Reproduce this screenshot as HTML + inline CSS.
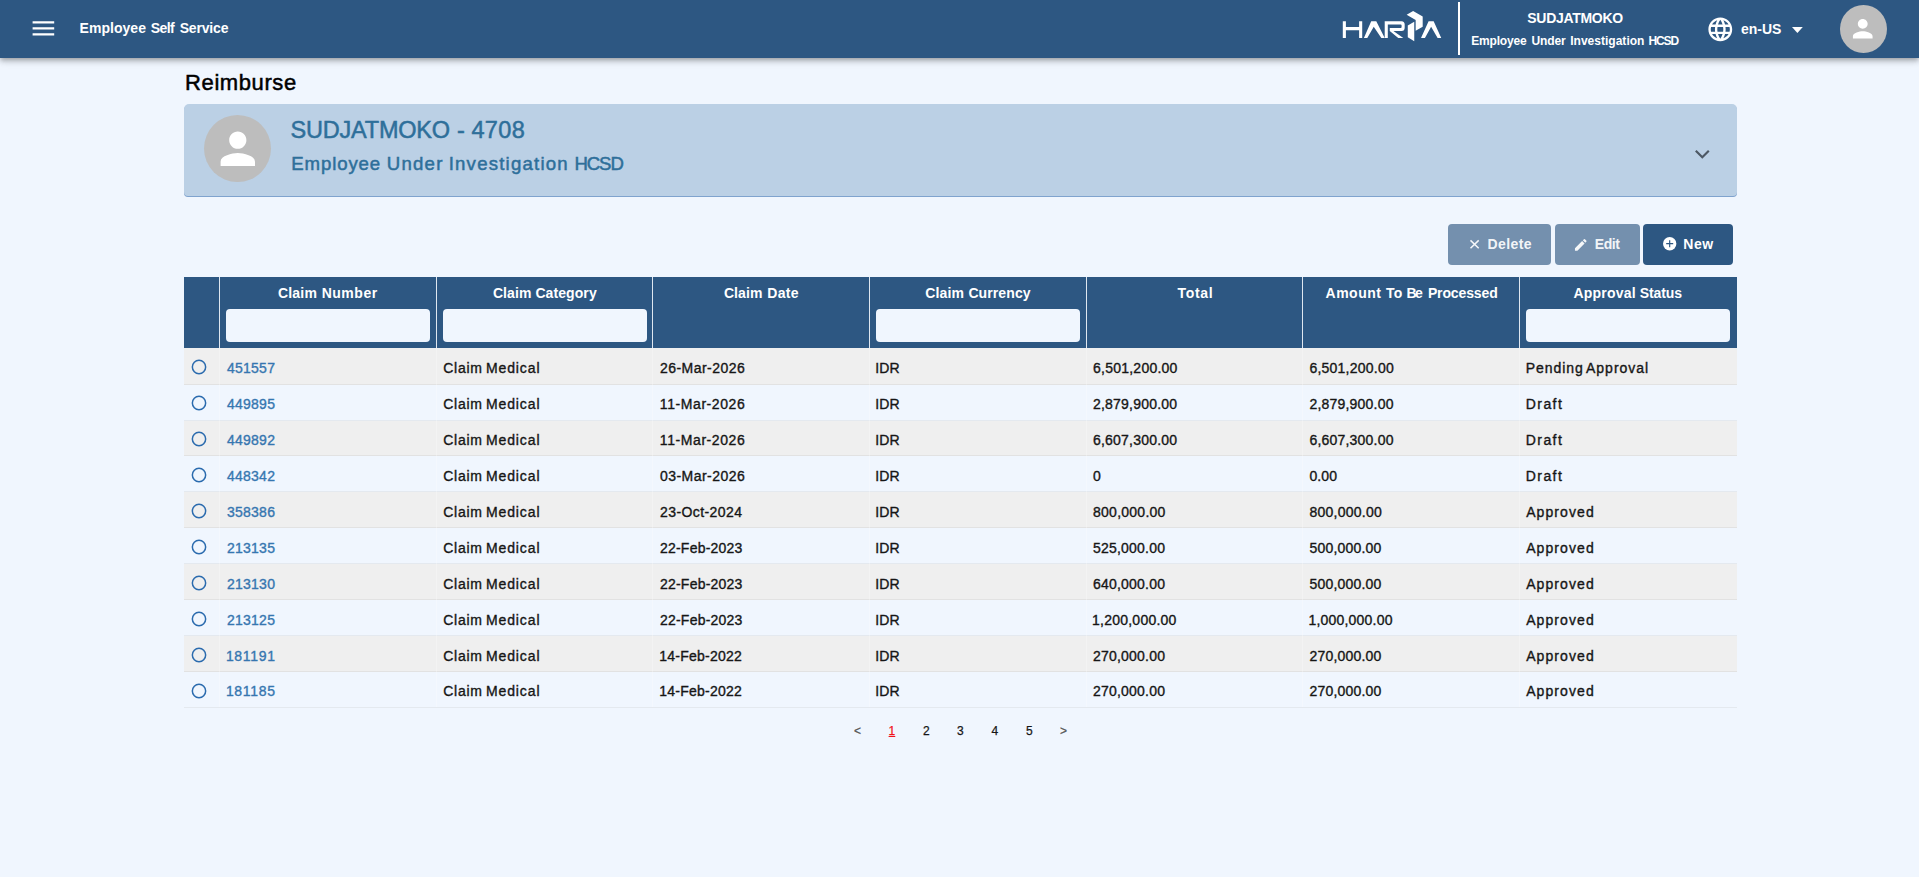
<!DOCTYPE html>
<html lang="en">
<head>
<meta charset="utf-8">
<title>Reimburse - Employee Self Service</title>
<style>
html,body{margin:0;padding:0}
body{width:1919px;height:877px;overflow:hidden;position:relative;background:#f0f6fe;font-family:"Liberation Sans",sans-serif}
.b{position:absolute}
.t{position:absolute;white-space:nowrap;line-height:1;font-weight:400}
.sw{-webkit-text-stroke:0.36px currentColor}
.sw3{-webkit-text-stroke:0.25px currentColor}
.sw5{-webkit-text-stroke:0.5px currentColor}
.g{}
.ul{text-decoration:underline;text-underline-offset:1px;text-decoration-thickness:1px}
.rad{position:absolute;width:14.8px;height:14.8px;box-sizing:border-box;border:1.5px solid #2c6cb0;border-radius:50%}
svg{position:absolute;overflow:visible}
#bar{position:absolute;left:0;top:0;width:1919px;height:57.8px;background:#2d5782;box-shadow:0 2px 4px -1px rgba(0,0,0,.2),0 4px 5px 0 rgba(0,0,0,.14),0 1px 10px 0 rgba(0,0,0,.12)}
#card{position:absolute;left:184px;top:104px;width:1552.6px;height:91.6px;background:#bbd0e5;border-radius:5px 5px 4px 4px;box-shadow:0 1px 0.5px rgba(90,135,190,.75)}
.av{position:absolute;border-radius:50%;background:#bdbdbd}
.btn{position:absolute;top:224px;height:40.5px;border-radius:4px}
</style>
</head>
<body>
<div class="b" style="left:184px;top:277px;width:1552.8px;height:71px;background:#2d5782;"></div>
<div class="b" style="left:219px;top:277px;width:1px;height:71px;background:#dfe7f0;"></div>
<div class="b" style="left:436px;top:277px;width:1px;height:71px;background:#dfe7f0;"></div>
<div class="b" style="left:652px;top:277px;width:1px;height:71px;background:#dfe7f0;"></div>
<div class="b" style="left:869px;top:277px;width:1px;height:71px;background:#dfe7f0;"></div>
<div class="b" style="left:1086px;top:277px;width:1px;height:71px;background:#dfe7f0;"></div>
<div class="b" style="left:1302px;top:277px;width:1px;height:71px;background:#dfe7f0;"></div>
<div class="b" style="left:1519px;top:277px;width:1px;height:71px;background:#dfe7f0;"></div>
<div class="b" style="left:226px;top:309px;width:204px;height:33px;background:#f0f6fe;border-radius:4px"></div>
<div class="b" style="left:443px;top:309px;width:204px;height:33px;background:#f0f6fe;border-radius:4px"></div>
<div class="b" style="left:876px;top:309px;width:204px;height:33px;background:#f0f6fe;border-radius:4px"></div>
<div class="b" style="left:1526px;top:309px;width:204px;height:33px;background:#f0f6fe;border-radius:4px"></div>
<div class="b" style="left:184px;top:348px;width:1552.8px;height:36px;background:#efefef;"></div>
<div class="b" style="left:184px;top:384px;width:1552.8px;height:1px;background:#e2e2e2;"></div>
<div class="b" style="left:184px;top:420px;width:1552.8px;height:1px;background:#e4e9ef;"></div>
<div class="b" style="left:184px;top:421px;width:1552.8px;height:34px;background:#efefef;"></div>
<div class="b" style="left:184px;top:455px;width:1552.8px;height:1px;background:#e2e2e2;"></div>
<div class="b" style="left:184px;top:491px;width:1552.8px;height:1px;background:#e4e9ef;"></div>
<div class="b" style="left:184px;top:492px;width:1552.8px;height:35px;background:#efefef;"></div>
<div class="b" style="left:184px;top:527px;width:1552.8px;height:1px;background:#e2e2e2;"></div>
<div class="b" style="left:184px;top:563px;width:1552.8px;height:1px;background:#e4e9ef;"></div>
<div class="b" style="left:184px;top:564px;width:1552.8px;height:35px;background:#efefef;"></div>
<div class="b" style="left:184px;top:599px;width:1552.8px;height:1px;background:#e2e2e2;"></div>
<div class="b" style="left:184px;top:635px;width:1552.8px;height:1px;background:#e4e9ef;"></div>
<div class="b" style="left:184px;top:636px;width:1552.8px;height:35px;background:#efefef;"></div>
<div class="b" style="left:184px;top:671px;width:1552.8px;height:1px;background:#e2e2e2;"></div>
<div class="b" style="left:184px;top:707px;width:1552.8px;height:1px;background:#e4e9ef;"></div>
<div class="b" style="left:219px;top:348px;width:1px;height:359px;background:rgba(255,255,255,.28);"></div>
<div class="b" style="left:436px;top:348px;width:1px;height:359px;background:rgba(255,255,255,.28);"></div>
<div class="b" style="left:652px;top:348px;width:1px;height:359px;background:rgba(255,255,255,.28);"></div>
<div class="b" style="left:869px;top:348px;width:1px;height:359px;background:rgba(255,255,255,.28);"></div>
<div class="b" style="left:1086px;top:348px;width:1px;height:359px;background:rgba(255,255,255,.28);"></div>
<div class="b" style="left:1302px;top:348px;width:1px;height:359px;background:rgba(255,255,255,.28);"></div>
<div class="b" style="left:1519px;top:348px;width:1px;height:359px;background:rgba(255,255,255,.28);"></div>
<div id="card"></div>
<div class="av" style="left:204px;top:114.9px;width:67.1px;height:67.1px"></div>
<svg style="left:212.25px;top:122.6px" width="51.6" height="51.6" viewBox="0 0 24 24"><path fill="#fff" d="M12 12c2.21 0 4-1.79 4-4s-1.79-4-4-4-4 1.79-4 4 1.79 4 4 4zm0 2c-2.67 0-8 1.34-8 4v2h16v-2c0-2.66-5.33-4-8-4z"/></svg>
<svg style="left:1695.1px;top:149.6px" width="14.6" height="8.6" viewBox="0 0 14.6 8.6"><path fill="none" stroke="#4d5864" stroke-width="2.2" d="M0.8 0.8L7.3 7.2L13.8 0.8"/></svg>

<div class="btn" style="left:1448px;width:102.8px;background:#7490ae"></div>
<div class="btn" style="left:1555px;width:84.6px;background:#7490ae"></div>
<div class="btn" style="left:1643px;width:89.8px;background:#2d5782"></div>
<svg style="left:1469.9px;top:240px" width="9.2" height="8.6" viewBox="0 0 9.2 8.6"><path fill="none" stroke="rgba(255,255,255,.93)" stroke-width="1.5" d="M0.5 0.4L8.7 8.2M8.7 0.4L0.5 8.2"/></svg>
<svg style="left:1573.4px;top:236.9px" width="15.6" height="15.6" viewBox="0 0 24 24"><path fill="rgba(255,255,255,.93)" d="M3 17.25V21h3.75L17.81 9.94l-3.75-3.75L3 17.25zM20.71 7.04c.39-.39.39-1.02 0-1.41l-2.34-2.34a.9959.9959 0 0 0-1.41 0l-1.83 1.83 3.75 3.75 1.83-1.83z"/></svg>
<svg style="left:1663px;top:237.35px" width="13.4" height="13.4" viewBox="0 0 13.4 13.4"><circle cx="6.7" cy="6.7" r="6.7" fill="#fff"/><path stroke="#2d5782" stroke-width="1.15" fill="none" d="M6.7 3.2V10.2M3.2 6.7H10.2"/></svg>

<div id="bar"></div>
<!-- hamburger -->
<svg style="left:28.9px;top:14.1px" width="28.8" height="28.8" viewBox="0 0 24 24"><path fill="#fff" d="M3 18h18v-2H3v2zm0-5h18v-2H3v2zm0-7v2h18V6H3z"/></svg>
<!-- logo -->
<svg style="left:1338px;top:6px" width="108" height="40" viewBox="0 0 1919 711">
<g fill="#fff">
<path d="M85 270h55v105h235V270h55v300h-55V430H140v140H85z"/>
<path d="M460 570L590 270h90l150 300h-60L635 370 520 570z"/>
<path d="M830 270h300q55 5 55 60v55q0 55-55 60H985l175 125h-90L920 445V390h195q15 0 15-15v-30q0-15-15-15H885v240h-55z"/>
<path d="M1220 155L1335 90l170 95v185l-125 70V250z"/>
<path d="M1240 345l115-65v345l-115-70z"/>
<path d="M1475 570l135-300h90l135 300h-65L1655 370 1545 570z"/>
</g>
</svg>
<div class="b" style="left:1458px;top:2px;width:2px;height:53px;background:#fff"></div>
<!-- globe -->
<svg style="left:1706px;top:15px" width="28.6" height="28.6" viewBox="0 0 24 24"><path fill="#fff" d="M11.99 2C6.47 2 2 6.48 2 12s4.47 10 9.99 10C17.52 22 22 17.52 22 12S17.52 2 11.99 2zm6.93 6h-2.95c-.32-1.25-.78-2.45-1.38-3.56 1.84.63 3.37 1.91 4.33 3.56zM12 4.04c.83 1.2 1.48 2.53 1.91 3.96h-3.82c.43-1.43 1.08-2.76 1.91-3.96zM4.26 14C4.1 13.36 4 12.69 4 12s.1-1.36.26-2h3.38c-.08.66-.14 1.32-.14 2 0 .68.06 1.34.14 2H4.26zm.82 2h2.95c.32 1.25.78 2.45 1.38 3.56-1.84-.63-3.37-1.9-4.33-3.56zm2.95-8H5.08c.96-1.66 2.49-2.93 4.33-3.56C8.81 5.55 8.35 6.75 8.03 8zM12 19.96c-.83-1.2-1.48-2.53-1.91-3.96h3.82c-.43 1.43-1.08 2.76-1.91 3.96zM14.34 14H9.66c-.09-.66-.16-1.32-.16-2 0-.68.07-1.35.16-2h4.68c.09.65.16 1.32.16 2 0 .68-.07 1.34-.16 2zm.25 5.56c.6-1.11 1.06-2.31 1.38-3.56h2.95c-.96 1.65-2.49 2.93-4.33 3.56zM16.36 14c.08-.66.14-1.32.14-2 0-.68-.06-1.34-.14-2h3.38c.16.64.26 1.31.26 2s-.1 1.36-.26 2h-3.38z"/></svg>
<svg style="left:1792.2px;top:26.7px" width="10.8" height="6" viewBox="0 0 10.8 6"><path fill="#fff" d="M0 0h10.8L5.4 6z"/></svg>
<!-- avatar -->
<div class="av" style="left:1839.9px;top:4.8px;width:47.3px;height:48.2px"></div>
<svg style="left:1848.3px;top:13.65px" width="29.5" height="29.5" viewBox="0 0 24 24"><path fill="#fff" d="M12 12c2.21 0 4-1.79 4-4s-1.79-4-4-4-4 1.79-4 4 1.79 4 4 4zm0 2c-2.67 0-8 1.34-8 4v2h16v-2c0-2.66-5.33-4-8-4z"/></svg>
<svg style="left:191.10px;top:359.00px" width="16" height="16" viewBox="0 0 16 16"><circle cx="8" cy="8" r="6.65" fill="none" stroke="#2b6bae" stroke-width="1.5"/></svg>
<svg style="left:191.10px;top:394.97px" width="16" height="16" viewBox="0 0 16 16"><circle cx="8" cy="8" r="6.65" fill="none" stroke="#2b6bae" stroke-width="1.5"/></svg>
<svg style="left:191.10px;top:430.94px" width="16" height="16" viewBox="0 0 16 16"><circle cx="8" cy="8" r="6.65" fill="none" stroke="#2b6bae" stroke-width="1.5"/></svg>
<svg style="left:191.10px;top:466.91px" width="16" height="16" viewBox="0 0 16 16"><circle cx="8" cy="8" r="6.65" fill="none" stroke="#2b6bae" stroke-width="1.5"/></svg>
<svg style="left:191.10px;top:502.88px" width="16" height="16" viewBox="0 0 16 16"><circle cx="8" cy="8" r="6.65" fill="none" stroke="#2b6bae" stroke-width="1.5"/></svg>
<svg style="left:191.10px;top:538.85px" width="16" height="16" viewBox="0 0 16 16"><circle cx="8" cy="8" r="6.65" fill="none" stroke="#2b6bae" stroke-width="1.5"/></svg>
<svg style="left:191.10px;top:574.82px" width="16" height="16" viewBox="0 0 16 16"><circle cx="8" cy="8" r="6.65" fill="none" stroke="#2b6bae" stroke-width="1.5"/></svg>
<svg style="left:191.10px;top:610.79px" width="16" height="16" viewBox="0 0 16 16"><circle cx="8" cy="8" r="6.65" fill="none" stroke="#2b6bae" stroke-width="1.5"/></svg>
<svg style="left:191.10px;top:646.76px" width="16" height="16" viewBox="0 0 16 16"><circle cx="8" cy="8" r="6.65" fill="none" stroke="#2b6bae" stroke-width="1.5"/></svg>
<svg style="left:191.10px;top:682.73px" width="16" height="16" viewBox="0 0 16 16"><circle cx="8" cy="8" r="6.65" fill="none" stroke="#2b6bae" stroke-width="1.5"/></svg>
<span class="t g" style="left:79.50px;top:21.00px;font-size:14px;color:#fff;letter-spacing:0.050px;font-weight:700">Employee</span>
<span class="t g" style="left:150.80px;top:21.00px;font-size:14px;color:#fff;letter-spacing:-0.605px;font-weight:700">Self</span>
<span class="t g" style="left:179.70px;top:21.00px;font-size:14px;color:#fff;letter-spacing:-0.172px;font-weight:700">Service</span>
<span class="t g" style="left:1527.30px;top:11.00px;font-size:14px;color:#fff;letter-spacing:-0.303px;font-weight:700">SUDJATMOKO</span>
<span class="t g" style="left:1471.30px;top:35.00px;font-size:12px;color:#fff;letter-spacing:-0.202px;font-weight:700">Employee</span>
<span class="t g" style="left:1531.50px;top:35.00px;font-size:12px;color:#fff;letter-spacing:-0.150px;font-weight:700">Under</span>
<span class="t g" style="left:1570.20px;top:35.00px;font-size:12px;color:#fff;letter-spacing:0.018px;font-weight:700">Investigation</span>
<span class="t g" style="left:1648.40px;top:35.00px;font-size:12px;color:#fff;letter-spacing:-1.079px;font-weight:700">HCSD</span>
<span class="t g" style="left:1741.00px;top:22.00px;font-size:14px;color:#fff;letter-spacing:-0.028px;font-weight:700">en-US</span>
<span class="t sw5" style="left:185.10px;top:71.50px;font-size:22px;color:#000;letter-spacing:0.583px">Reimburse</span>
<span class="t sw5" style="left:290.60px;top:119.25px;font-size:23.5px;color:#2e6f9a;letter-spacing:-0.220px">SUDJATMOKO</span>
<span class="t sw5" style="left:456.90px;top:119.25px;font-size:23.5px;color:#2e6f9a;letter-spacing:0.000px">-</span>
<span class="t sw5" style="left:471.40px;top:119.25px;font-size:23.5px;color:#2e6f9a;letter-spacing:0.397px">4708</span>
<span class="t sw5" style="left:291.30px;top:155.20px;font-size:18.6px;color:#2e6f9a;letter-spacing:0.880px">Employee</span>
<span class="t sw5" style="left:386.70px;top:155.20px;font-size:18.6px;color:#2e6f9a;letter-spacing:1.262px">Under</span>
<span class="t sw5" style="left:448.70px;top:155.20px;font-size:18.6px;color:#2e6f9a;letter-spacing:1.212px">Investigation</span>
<span class="t sw5" style="left:574.50px;top:155.20px;font-size:18.6px;color:#2e6f9a;letter-spacing:-1.119px">HCSD</span>
<span class="t" style="left:1487.50px;top:237.00px;font-size:14px;color:rgba(255,255,255,.93);letter-spacing:0.393px;font-weight:700">Delete</span>
<span class="t" style="left:1594.70px;top:237.00px;font-size:14px;color:rgba(255,255,255,.93);letter-spacing:-0.393px;font-weight:700">Edit</span>
<span class="t" style="left:1683.30px;top:237.00px;font-size:14px;color:#fff;letter-spacing:0.552px;font-weight:700">New</span>
<span class="t" style="left:278.00px;top:286.00px;font-size:14px;color:#fff;letter-spacing:0.181px;font-weight:700">Claim</span>
<span class="t" style="left:321.70px;top:286.00px;font-size:14px;color:#fff;letter-spacing:0.510px;font-weight:700">Number</span>
<span class="t" style="left:492.90px;top:286.00px;font-size:14px;color:#fff;letter-spacing:0.081px;font-weight:700">Claim</span>
<span class="t" style="left:535.40px;top:286.00px;font-size:14px;color:#fff;letter-spacing:0.086px;font-weight:700">Category</span>
<span class="t" style="left:723.90px;top:286.00px;font-size:14px;color:#fff;letter-spacing:0.106px;font-weight:700">Claim</span>
<span class="t" style="left:767.30px;top:286.00px;font-size:14px;color:#fff;letter-spacing:0.314px;font-weight:700">Date</span>
<span class="t" style="left:925.30px;top:286.00px;font-size:14px;color:#fff;letter-spacing:0.106px;font-weight:700">Claim</span>
<span class="t" style="left:968.40px;top:286.00px;font-size:14px;color:#fff;letter-spacing:0.102px;font-weight:700">Currency</span>
<span class="t" style="left:1177.40px;top:286.00px;font-size:14px;color:#fff;letter-spacing:0.722px;font-weight:700">Total</span>
<span class="t" style="left:1325.50px;top:286.00px;font-size:14px;color:#fff;letter-spacing:0.517px;font-weight:700">Amount</span>
<span class="t" style="left:1385.90px;top:286.00px;font-size:14px;color:#fff;letter-spacing:0.287px;font-weight:700">To</span>
<span class="t" style="left:1406.50px;top:286.00px;font-size:14px;color:#fff;letter-spacing:-1.710px;font-weight:700">Be</span>
<span class="t" style="left:1427.90px;top:286.00px;font-size:14px;color:#fff;letter-spacing:-0.121px;font-weight:700">Processed</span>
<span class="t" style="left:1573.40px;top:286.00px;font-size:14px;color:#fff;letter-spacing:0.231px;font-weight:700">Approval</span>
<span class="t" style="left:1639.80px;top:286.00px;font-size:14px;color:#fff;letter-spacing:-0.100px;font-weight:700">Status</span>
<span class="t sw" style="left:226.90px;top:361.00px;font-size:14px;color:#3676b0;letter-spacing:0.264px">451557</span>
<span class="t sw" style="left:443.20px;top:361.00px;font-size:14px;color:#161616;letter-spacing:0.746px">Claim</span>
<span class="t sw" style="left:486.00px;top:361.00px;font-size:14px;color:#161616;letter-spacing:0.878px">Medical</span>
<span class="t sw" style="left:660.00px;top:361.00px;font-size:14px;color:#161616;letter-spacing:0.463px">26-Mar-2026</span>
<span class="t sw" style="left:875.30px;top:361.00px;font-size:14px;color:#161616;letter-spacing:0.125px">IDR</span>
<span class="t sw" style="left:1093.00px;top:361.00px;font-size:14px;color:#161616;letter-spacing:0.240px">6,501,200.00</span>
<span class="t sw" style="left:1309.40px;top:361.00px;font-size:14px;color:#161616;letter-spacing:0.240px">6,501,200.00</span>
<span class="t sw" style="left:1525.70px;top:361.00px;font-size:14px;color:#161616;letter-spacing:0.951px">Pending</span>
<span class="t sw" style="left:1586.00px;top:361.00px;font-size:14px;color:#161616;letter-spacing:0.994px">Approval</span>
<span class="t sw" style="left:226.90px;top:397.00px;font-size:14px;color:#3676b0;letter-spacing:0.264px">449895</span>
<span class="t sw" style="left:443.20px;top:397.00px;font-size:14px;color:#161616;letter-spacing:0.746px">Claim</span>
<span class="t sw" style="left:486.00px;top:397.00px;font-size:14px;color:#161616;letter-spacing:0.878px">Medical</span>
<span class="t sw" style="left:659.80px;top:397.00px;font-size:14px;color:#161616;letter-spacing:0.587px">11-Mar-2026</span>
<span class="t sw" style="left:875.30px;top:397.00px;font-size:14px;color:#161616;letter-spacing:0.125px">IDR</span>
<span class="t sw" style="left:1093.00px;top:397.00px;font-size:14px;color:#161616;letter-spacing:0.210px">2,879,900.00</span>
<span class="t sw" style="left:1309.40px;top:397.00px;font-size:14px;color:#161616;letter-spacing:0.210px">2,879,900.00</span>
<span class="t sw" style="left:1525.80px;top:397.00px;font-size:14px;color:#161616;letter-spacing:1.413px">Draft</span>
<span class="t sw" style="left:226.90px;top:433.00px;font-size:14px;color:#3676b0;letter-spacing:0.264px">449892</span>
<span class="t sw" style="left:443.20px;top:433.00px;font-size:14px;color:#161616;letter-spacing:0.746px">Claim</span>
<span class="t sw" style="left:486.00px;top:433.00px;font-size:14px;color:#161616;letter-spacing:0.878px">Medical</span>
<span class="t sw" style="left:659.80px;top:433.00px;font-size:14px;color:#161616;letter-spacing:0.587px">11-Mar-2026</span>
<span class="t sw" style="left:875.30px;top:433.00px;font-size:14px;color:#161616;letter-spacing:0.125px">IDR</span>
<span class="t sw" style="left:1093.00px;top:433.00px;font-size:14px;color:#161616;letter-spacing:0.210px">6,607,300.00</span>
<span class="t sw" style="left:1309.40px;top:433.00px;font-size:14px;color:#161616;letter-spacing:0.210px">6,607,300.00</span>
<span class="t sw" style="left:1525.80px;top:433.00px;font-size:14px;color:#161616;letter-spacing:1.413px">Draft</span>
<span class="t sw" style="left:226.90px;top:469.00px;font-size:14px;color:#3676b0;letter-spacing:0.264px">448342</span>
<span class="t sw" style="left:443.20px;top:469.00px;font-size:14px;color:#161616;letter-spacing:0.746px">Claim</span>
<span class="t sw" style="left:486.00px;top:469.00px;font-size:14px;color:#161616;letter-spacing:0.878px">Medical</span>
<span class="t sw" style="left:660.00px;top:469.00px;font-size:14px;color:#161616;letter-spacing:0.463px">03-Mar-2026</span>
<span class="t sw" style="left:875.30px;top:469.00px;font-size:14px;color:#161616;letter-spacing:0.125px">IDR</span>
<span class="t sw" style="left:1093.00px;top:469.00px;font-size:14px;color:#161616;letter-spacing:0.000px">0</span>
<span class="t sw" style="left:1309.40px;top:469.00px;font-size:14px;color:#161616;letter-spacing:0.113px">0.00</span>
<span class="t sw" style="left:1525.80px;top:469.00px;font-size:14px;color:#161616;letter-spacing:1.413px">Draft</span>
<span class="t sw" style="left:226.90px;top:505.00px;font-size:14px;color:#3676b0;letter-spacing:0.264px">358386</span>
<span class="t sw" style="left:443.20px;top:505.00px;font-size:14px;color:#161616;letter-spacing:0.746px">Claim</span>
<span class="t sw" style="left:486.00px;top:505.00px;font-size:14px;color:#161616;letter-spacing:0.878px">Medical</span>
<span class="t sw" style="left:660.00px;top:505.00px;font-size:14px;color:#161616;letter-spacing:0.417px">23-Oct-2024</span>
<span class="t sw" style="left:875.30px;top:505.00px;font-size:14px;color:#161616;letter-spacing:0.125px">IDR</span>
<span class="t sw" style="left:1093.00px;top:505.00px;font-size:14px;color:#161616;letter-spacing:0.258px">800,000.00</span>
<span class="t sw" style="left:1309.40px;top:505.00px;font-size:14px;color:#161616;letter-spacing:0.258px">800,000.00</span>
<span class="t sw" style="left:1526.20px;top:505.00px;font-size:14px;color:#161616;letter-spacing:1.079px">Approved</span>
<span class="t sw" style="left:226.90px;top:541.00px;font-size:14px;color:#3676b0;letter-spacing:0.264px">213135</span>
<span class="t sw" style="left:443.20px;top:541.00px;font-size:14px;color:#161616;letter-spacing:0.746px">Claim</span>
<span class="t sw" style="left:486.00px;top:541.00px;font-size:14px;color:#161616;letter-spacing:0.878px">Medical</span>
<span class="t sw" style="left:660.00px;top:541.00px;font-size:14px;color:#161616;letter-spacing:0.212px">22-Feb-2023</span>
<span class="t sw" style="left:875.30px;top:541.00px;font-size:14px;color:#161616;letter-spacing:0.125px">IDR</span>
<span class="t sw" style="left:1093.00px;top:541.00px;font-size:14px;color:#161616;letter-spacing:0.210px">525,000.00</span>
<span class="t sw" style="left:1309.40px;top:541.00px;font-size:14px;color:#161616;letter-spacing:0.210px">500,000.00</span>
<span class="t sw" style="left:1526.20px;top:541.00px;font-size:14px;color:#161616;letter-spacing:1.079px">Approved</span>
<span class="t sw" style="left:226.90px;top:577.00px;font-size:14px;color:#3676b0;letter-spacing:0.264px">213130</span>
<span class="t sw" style="left:443.20px;top:577.00px;font-size:14px;color:#161616;letter-spacing:0.746px">Claim</span>
<span class="t sw" style="left:486.00px;top:577.00px;font-size:14px;color:#161616;letter-spacing:0.878px">Medical</span>
<span class="t sw" style="left:660.00px;top:577.00px;font-size:14px;color:#161616;letter-spacing:0.212px">22-Feb-2023</span>
<span class="t sw" style="left:875.30px;top:577.00px;font-size:14px;color:#161616;letter-spacing:0.125px">IDR</span>
<span class="t sw" style="left:1093.00px;top:577.00px;font-size:14px;color:#161616;letter-spacing:0.210px">640,000.00</span>
<span class="t sw" style="left:1309.40px;top:577.00px;font-size:14px;color:#161616;letter-spacing:0.210px">500,000.00</span>
<span class="t sw" style="left:1526.20px;top:577.00px;font-size:14px;color:#161616;letter-spacing:1.079px">Approved</span>
<span class="t sw" style="left:226.90px;top:613.00px;font-size:14px;color:#3676b0;letter-spacing:0.264px">213125</span>
<span class="t sw" style="left:443.20px;top:613.00px;font-size:14px;color:#161616;letter-spacing:0.746px">Claim</span>
<span class="t sw" style="left:486.00px;top:613.00px;font-size:14px;color:#161616;letter-spacing:0.878px">Medical</span>
<span class="t sw" style="left:660.00px;top:613.00px;font-size:14px;color:#161616;letter-spacing:0.212px">22-Feb-2023</span>
<span class="t sw" style="left:875.30px;top:613.00px;font-size:14px;color:#161616;letter-spacing:0.125px">IDR</span>
<span class="t sw" style="left:1092.00px;top:613.00px;font-size:14px;color:#161616;letter-spacing:0.240px">1,200,000.00</span>
<span class="t sw" style="left:1308.40px;top:613.00px;font-size:14px;color:#161616;letter-spacing:0.210px">1,000,000.00</span>
<span class="t sw" style="left:1526.20px;top:613.00px;font-size:14px;color:#161616;letter-spacing:1.079px">Approved</span>
<span class="t sw" style="left:225.90px;top:649.00px;font-size:14px;color:#3676b0;letter-spacing:0.672px">181191</span>
<span class="t sw" style="left:443.20px;top:649.00px;font-size:14px;color:#161616;letter-spacing:0.746px">Claim</span>
<span class="t sw" style="left:486.00px;top:649.00px;font-size:14px;color:#161616;letter-spacing:0.878px">Medical</span>
<span class="t sw" style="left:659.30px;top:649.00px;font-size:14px;color:#161616;letter-spacing:0.232px">14-Feb-2022</span>
<span class="t sw" style="left:875.30px;top:649.00px;font-size:14px;color:#161616;letter-spacing:0.125px">IDR</span>
<span class="t sw" style="left:1093.00px;top:649.00px;font-size:14px;color:#161616;letter-spacing:0.210px">270,000.00</span>
<span class="t sw" style="left:1309.40px;top:649.00px;font-size:14px;color:#161616;letter-spacing:0.210px">270,000.00</span>
<span class="t sw" style="left:1526.20px;top:649.00px;font-size:14px;color:#161616;letter-spacing:1.079px">Approved</span>
<span class="t sw" style="left:225.90px;top:684.00px;font-size:14px;color:#3676b0;letter-spacing:0.672px">181185</span>
<span class="t sw" style="left:443.20px;top:684.00px;font-size:14px;color:#161616;letter-spacing:0.746px">Claim</span>
<span class="t sw" style="left:486.00px;top:684.00px;font-size:14px;color:#161616;letter-spacing:0.878px">Medical</span>
<span class="t sw" style="left:659.30px;top:684.00px;font-size:14px;color:#161616;letter-spacing:0.232px">14-Feb-2022</span>
<span class="t sw" style="left:875.30px;top:684.00px;font-size:14px;color:#161616;letter-spacing:0.125px">IDR</span>
<span class="t sw" style="left:1093.00px;top:684.00px;font-size:14px;color:#161616;letter-spacing:0.210px">270,000.00</span>
<span class="t sw" style="left:1309.40px;top:684.00px;font-size:14px;color:#161616;letter-spacing:0.210px">270,000.00</span>
<span class="t sw" style="left:1526.20px;top:684.00px;font-size:14px;color:#161616;letter-spacing:1.079px">Approved</span>
<span class="t sw3" style="left:854.00px;top:725.00px;font-size:12px;color:#555;letter-spacing:0.000px">&lt;</span>
<span class="t sw3" style="left:923.00px;top:725.00px;font-size:12px;color:#161616;letter-spacing:0.000px">2</span>
<span class="t sw3" style="left:957.00px;top:725.00px;font-size:12px;color:#161616;letter-spacing:0.000px">3</span>
<span class="t sw3" style="left:991.60px;top:725.00px;font-size:12px;color:#161616;letter-spacing:0.000px">4</span>
<span class="t sw3" style="left:1026.00px;top:725.00px;font-size:12px;color:#161616;letter-spacing:0.000px">5</span>
<span class="t sw3" style="left:1060.00px;top:725.00px;font-size:12px;color:#555;letter-spacing:0.000px">&gt;</span>
<span class="t sw3 ul" style="left:888.60px;top:725.00px;font-size:12px;color:#f0141c;letter-spacing:0.000px">1</span>
</body>
</html>
